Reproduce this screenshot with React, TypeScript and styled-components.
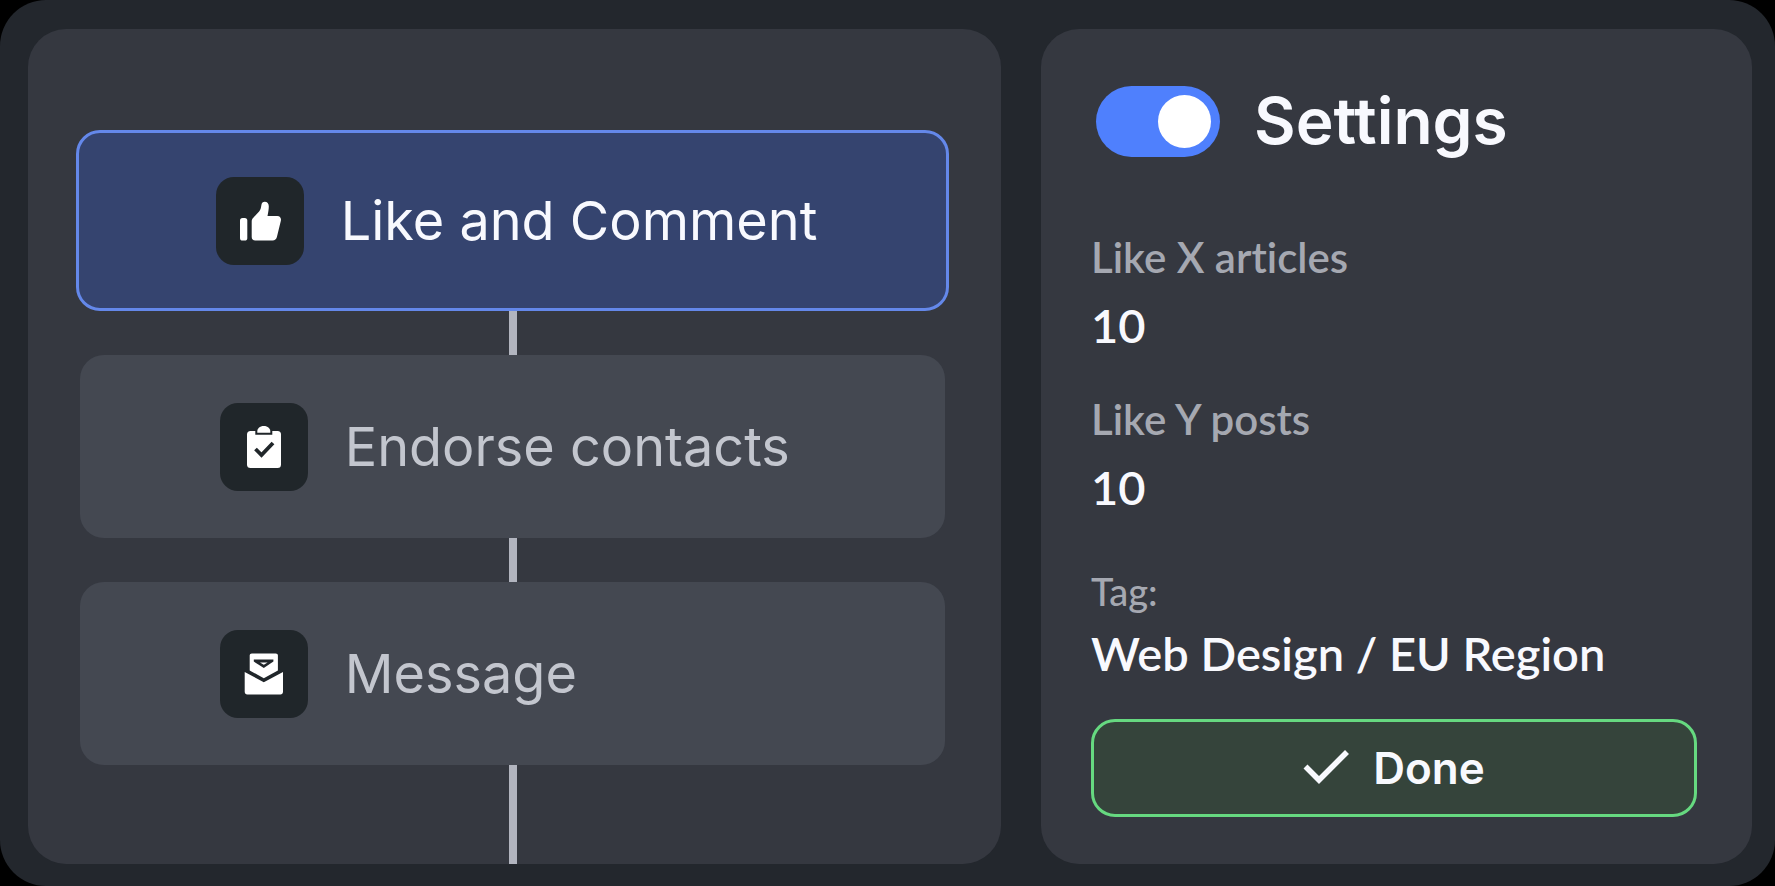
import React, { useState } from 'react';
import styled, { createGlobalStyle, css } from 'styled-components';

const color = {
  shell: '#23272d',
  panel: '#353840',
  card: '#444851',
  tile: '#20262a',
  active: '#35446f',
  activeBorder: '#6488ea',
  line: '#b2b5bf',
  muted: '#a5a8b1',
  dim: '#c3c6ce',
  text: '#f8f9fe',
  toggle: '#4f80fd',
  done: '#35443b',
  doneBorder: '#66d980',
};

const GlobalStyle = createGlobalStyle`
  * { box-sizing: border-box; }
  body { margin: 0; background: #000; }
  button, input { font: inherit; color: inherit; }
`;

const Shell = styled.main`
  min-height: 100vh;
  display: grid;
  grid-template-columns: 973fr 711fr;
  gap: 40px;
  padding: 29px 23px 22px 28px;
  border-radius: 46px;
  background: ${color.shell};
  color: ${color.text};
  font-family: Inter, 'Liberation Sans', sans-serif;
`;

const Panel = styled.section`
  min-width: 0;
  display: flex;
  flex-direction: column;
  border-radius: 38px;
  background: ${color.panel};
`;

const Flow = styled(Panel)`
  padding: 101px 52px 0 48px;
`;

const StepButton = styled.button<{ $active: boolean }>`
  display: flex;
  align-items: center;
  gap: 37px;
  height: 183px;
  margin: 0 4px;
  padding: 0 24px 0 16%;
  border: 0;
  border-radius: 24px;
  background: ${color.card};
  color: ${color.dim};
  font-size: 54px;
  line-height: 64px;
  white-space: nowrap;
  cursor: pointer;
  ${({ $active }) =>
    $active &&
    css`
      height: 181px;
      margin: 0;
      padding-left: calc(16% - 3px);
      border: 3px solid ${color.activeBorder};
      background: ${color.active};
      color: ${color.text};
    `}
`;

const IconTile = styled.span`
  flex: none;
  width: 88px;
  height: 88px;
  border-radius: 18px;
  background: ${color.tile};
  svg { display: block; }
`;

const Connector = styled.div<{ $last: boolean }>`
  align-self: center;
  width: 8px;
  min-height: 44px;
  flex: ${({ $last }) => ($last ? '1 0 auto' : 'none')};
  background: ${color.line};
`;

const SettingsForm = styled.form`
  display: flex;
  flex-direction: column;
  flex: 1;
  padding: 56px 55px 47px 50px;
`;

const Heading = styled.div`
  display: flex;
  align-items: center;
  gap: 34px;
  padding-left: 5px;
  margin-bottom: 70px;
`;

const Toggle = styled.input`
  appearance: none;
  flex: none;
  display: flex;
  align-items: center;
  width: 124px;
  height: 71px;
  margin: 0;
  padding: 0 9px;
  border-radius: 36px;
  background: ${color.muted};
  cursor: pointer;
  &::before {
    content: '';
    width: 53px;
    height: 53px;
    border-radius: 50%;
    background: #fff;
  }
  &:checked {
    justify-content: flex-end;
    background: ${color.toggle};
  }
`;

const Title = styled.label`
  font-size: 64px;
  font-weight: 600;
  font-feature-settings: 'calt' 0;
  line-height: 72px;
`;

const Field = styled.div<{ $compact?: boolean }>`
  display: flex;
  flex-direction: column;
  gap: ${({ $compact }) => ($compact ? 0 : 4)}px;
  margin-top: ${({ $compact }) => ($compact ? 12 : 0)}px;
  margin-bottom: 30px;
  font-family: Lato, 'Open Sans', sans-serif;
  font-variant-ligatures: none;
`;

const FieldLabel = styled.label<{ $small?: boolean }>`
  color: ${color.muted};
  font-size: ${({ $small }) => ($small ? 38 : 42)}px;
  font-weight: ${({ $small }) => ($small ? 500 : 600)};
  line-height: ${({ $small }) => ($small ? 56 : 60)}px;
`;

const FieldInput = styled.input`
  width: 100%;
  height: 68px;
  padding: 0;
  border: 0;
  outline: 0;
  background: transparent;
  font-size: 47px;
  font-weight: 600;
  line-height: 68px;
`;

const DoneButton = styled.button`
  display: flex;
  align-items: center;
  justify-content: center;
  gap: 22px;
  height: 98px;
  margin-top: auto;
  border: 3px solid ${color.doneBorder};
  border-radius: 24px;
  background: ${color.done};
  font-size: 44px;
  font-weight: 600;
  line-height: 56px;
  cursor: pointer;
`;

const ThumbIcon = () => (
  <svg width="88" height="88" viewBox="0 0 88 88" fill="#fff" aria-hidden="true">
    <rect x="24" y="41" width="7.3" height="22.6" rx="2.6" />
    <path d="M35.7 44.5c0-1.600.5-2.600 1.600-3.700l5.800-6.300c1-1.200 1.600-2.500 1.900-4.200l.4-2.300c.4-2.200 1.500-3.300 3.300-3.300 2.600 0 4.100 1.900 4.100 4.500 0 2.800-.4 5.500-1.300 9.800h9.800c2.800 0 4.200 2.200 3.500 5l-3.900 16.100c-.6 2.300-2 3.500-4.300 3.500H39.300c-2.300 0-3.600-1.400-3.600-3.600Z" />
  </svg>
);

const ClipboardIcon = () => (
  <svg width="88" height="88" viewBox="0 0 88 88" aria-hidden="true">
    <rect x="27" y="28" width="34" height="37" rx="3.5" fill="#fff" />
    <path d="M37 29.5c0-4 2.800-6.500 6.800-6.500s6.800 2.500 6.800 6.500Z" fill="#fff" />
    <path d="M36.300 27.500v3.200h15v-3.200" fill="none" stroke={color.tile} strokeWidth="2" />
    <path d="m35.500 46 6 6L53 40" fill="none" stroke={color.tile} strokeWidth="3.8" />
  </svg>
);

const MailIcon = () => (
  <svg width="88" height="88" viewBox="0 0 88 88" fill="#fff" aria-hidden="true">
    <path d="M29.700 25.700c0-1.400.8-2.200 2.200-2.200h23.800c1.400 0 2.200.8 2.200 2.200v14.800L43.800 48.200 29.700 40.500Z" />
    <path d="M24.700 42 43.800 52.200 63 42v19.800c0 1.600-1 2.600-2.600 2.600H27.300c-1.600 0-2.600-1-2.600-2.600Z" />
    <path d="M33.800 29.600h19.600v2L43.800 38l-10-6.400Z" fill={color.tile} />
    <path d="M40 32.400h7.600l-3.800 2.400Z" />
  </svg>
);

const CheckIcon = () => (
  <svg width="48" height="40" viewBox="0 0 48 40" fill="none" stroke={color.text} strokeWidth="5.600" aria-hidden="true">
    <path d="m2.500 18.500 13.500 13.500L44 4" />
  </svg>
);

const steps = [
  { name: 'Like and Comment', Icon: ThumbIcon },
  { name: 'Endorse contacts', Icon: ClipboardIcon },
  { name: 'Message', Icon: MailIcon },
];

export default function App() {
  const [active, setActive] = useState(0);

  return (
    <>
      <GlobalStyle />
      <Shell>
        <Flow aria-label="Campaign steps">
          {steps.map(({ name, Icon }, i) => (
            <React.Fragment key={name}>
              <StepButton type="button" $active={i === active} aria-pressed={i === active} onClick={() => setActive(i)}>
                <IconTile>
                  <Icon />
                </IconTile>
                {name}
              </StepButton>
              <Connector $last={i === steps.length - 1} />
            </React.Fragment>
          ))}
        </Flow>
        <Panel aria-label="Settings">
          <SettingsForm onSubmit={(e) => e.preventDefault()}>
            <Heading>
              <Toggle id="enabled" type="checkbox" role="switch" defaultChecked />
              <Title htmlFor="enabled">Settings</Title>
            </Heading>
            <Field>
              <FieldLabel htmlFor="articles">Like X articles</FieldLabel>
              <FieldInput id="articles" inputMode="numeric" defaultValue="10" />
            </Field>
            <Field>
              <FieldLabel htmlFor="posts">Like Y posts</FieldLabel>
              <FieldInput id="posts" inputMode="numeric" defaultValue="10" />
            </Field>
            <Field $compact>
              <FieldLabel htmlFor="tag" $small>Tag:</FieldLabel>
              <FieldInput id="tag" defaultValue="Web Design / EU Region" />
            </Field>
            <DoneButton type="submit">
              <CheckIcon />
              Done
            </DoneButton>
          </SettingsForm>
        </Panel>
      </Shell>
    </>
  );
}
